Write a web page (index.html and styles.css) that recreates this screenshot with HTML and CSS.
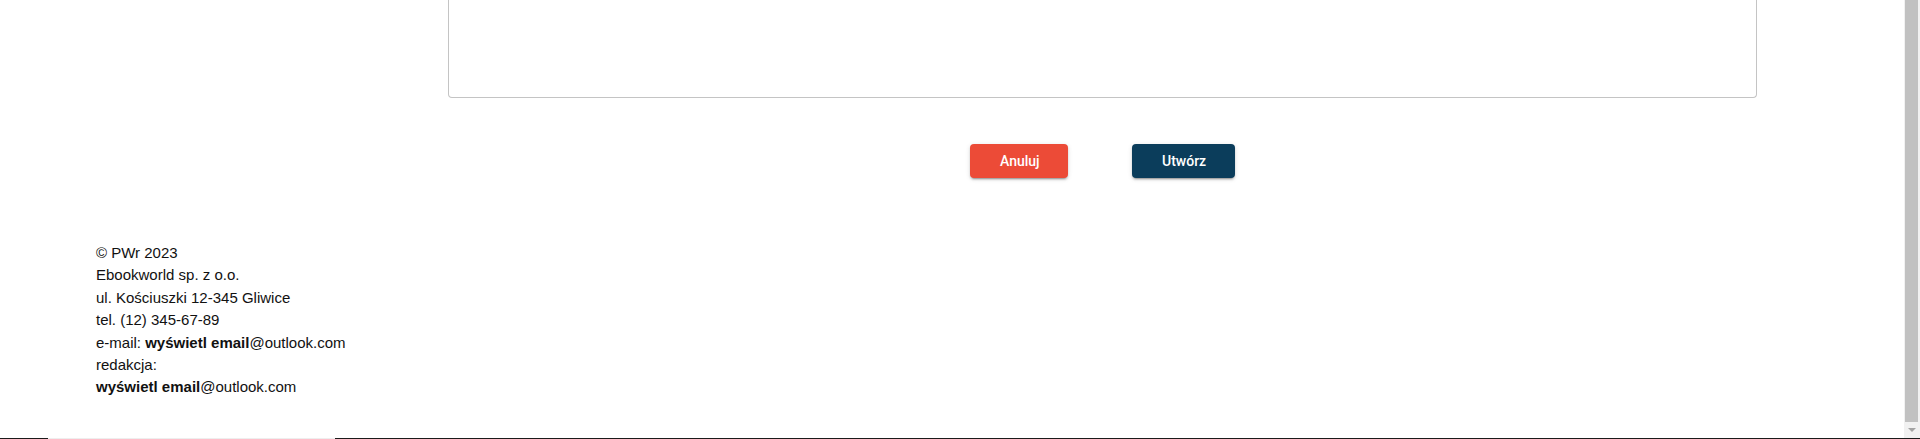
FILE: index.html
```html
<!DOCTYPE html>
<html lang="pl">
<head>
<meta charset="utf-8">
<title>Ebookworld</title>
<link rel="stylesheet" href="styles.css">
</head>
<body>
<div class="screen">
  <div class="viewport">
    <main class="page">
      <section class="form">
        <div class="textarea"></div>
        <div class="actions">
          <button class="btn btn-cancel" type="button">Anuluj</button>
          <button class="btn btn-create" type="button">Utwórz</button>
        </div>
      </section>
      <footer class="footer">
        <div>© PWr 2023</div>
        <div>Ebookworld sp. z o.o.</div>
        <div>ul. Kościuszki 12-345 Gliwice</div>
        <div>tel. (12) 345-67-89</div>
        <div>e-mail: <b>wyświetl email</b>@outlook.com</div>
        <div>redakcja:</div>
        <div><b>wyświetl email</b>@outlook.com</div>
      </footer>
    </main>
    <div class="scrollbar">
      <div class="thumb"></div>
      <div class="arrow"><span class="tri"></span></div>
    </div>
  </div>
  <div class="edge">
    <span class="edge-a"></span><span class="edge-b"></span><span class="edge-c"></span>
  </div>
</div>
</body>
</html>
```
FILE: styles.css
```css
html, body {
  margin: 0;
  padding: 0;
  background: #fff;
}
.screen {
  width: 1920px;
  height: 439px;
  display: flex;
  flex-direction: column;
  overflow: hidden;
}
.viewport {
  flex: 1;
  display: flex;
  min-height: 0;
}
.page {
  flex: 1;
  display: flex;
  flex-direction: column;
}
.form {
  padding: 0 147px 0 448px;
  display: flex;
  flex-direction: column;
}
.textarea {
  height: 98px;
  box-sizing: border-box;
  border: 1px solid #c4c4c4;
  border-top: 0;
  border-radius: 0 0 4px 4px;
}
.actions {
  display: flex;
  justify-content: center;
  gap: 64px;
  margin-top: 46px;
}
.btn {
  height: 34px;
  border: 0;
  border-radius: 4px;
  color: #fff;
  font-family: Roboto, "Liberation Sans", Arial, sans-serif;
  font-weight: 500;
  font-size: 14px;
  padding: 0 30px;
  box-shadow: 0 3px 1px -2px rgba(0,0,0,.2), 0 2px 2px 0 rgba(0,0,0,.14), 0 1px 5px 0 rgba(0,0,0,.12);
}
.btn-cancel {
  background: #ec4b37;
  width: 98px;
}
.btn-create {
  background: #0b3d5b;
  width: 103px;
}
.footer {
  margin-top: 64px;
  padding-left: 96px;
  font-family: "Liberation Sans", Arial, sans-serif;
  font-size: 15px;
  line-height: 22.4px;
  color: #111;
}
.footer b {
  font-weight: 700;
}
.scrollbar {
  width: 16px;
  background: #f1f1f1;
  display: flex;
  flex-direction: column;
  justify-content: space-between;
}
.thumb {
  margin: 0 2px 0 1px;
  height: 422px;
  background: #c1c1c1;
}
.arrow {
  height: 16px;
  display: flex;
  align-items: center;
  justify-content: center;
}
.tri {
  width: 0;
  height: 0;
  border-left: 4px solid transparent;
  border-right: 4px solid transparent;
  border-top: 4px solid #a3a3a3;
}
.edge {
  height: 1px;
  display: flex;
}
.edge-a {
  width: 48px;
  background: #1b1b1b;
}
.edge-b {
  width: 287px;
  background: #eeeeee;
}
.edge-c {
  flex: 1;
  background: #1b1b1b;
}
```
